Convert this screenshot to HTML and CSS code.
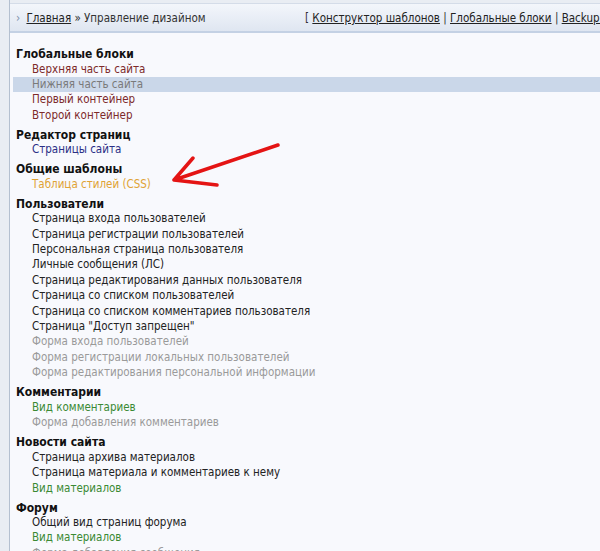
FILE: index.html
```html
<!DOCTYPE html>
<html lang="ru">
<head>
    <meta charset="UTF-8">
    <title>Управление дизайном</title>
    <link rel="stylesheet" href="styles.css">
</head>
<body>
    <div class="page">
        <div class="crumbs">
            <div class="crumbs-left">
                <span class="bullet">›</span>
                <a href="#">Главная</a> » Управление дизайном
            </div>
            <div class="crumbs-right">
                [ <a href="#">Конструктор шаблонов</a> | <a href="#">Глобальные блоки</a> | <a href="#">Backup шаблонов</a> ]
            </div>
        </div>

        <div class="content">
            <div class="group">
                <div class="group-title">Глобальные блоки</div>
                <div class="item red">Верхняя часть сайта</div>
                <div class="item gray active">Нижняя часть сайта</div>
                <div class="item red">Первый контейнер</div>
                <div class="item red">Второй контейнер</div>
            </div>
            <div class="group">
                <div class="group-title">Редактор страниц</div>
                <div class="item blue">Страницы сайта</div>
            </div>
            <div class="group">
                <div class="group-title">Общие шаблоны</div>
                <div class="item orange">Таблица стилей (CSS)</div>
            </div>
            <div class="group">
                <div class="group-title">Пользователи</div>
                <div class="item">Страница входа пользователей</div>
                <div class="item">Страница регистрации пользователей</div>
                <div class="item">Персональная страница пользователя</div>
                <div class="item">Личные сообщения (ЛС)</div>
                <div class="item">Страница редактирования данных пользователя</div>
                <div class="item">Страница со списком пользователей</div>
                <div class="item">Страница со списком комментариев пользователя</div>
                <div class="item">Страница "Доступ запрещен"</div>
                <div class="item gray">Форма входа пользователей</div>
                <div class="item gray">Форма регистрации локальных пользователей</div>
                <div class="item gray">Форма редактирования персональной информации</div>
            </div>
            <div class="group">
                <div class="group-title">Комментарии</div>
                <div class="item green">Вид комментариев</div>
                <div class="item gray">Форма добавления комментариев</div>
            </div>
            <div class="group">
                <div class="group-title">Новости сайта</div>
                <div class="item">Страница архива материалов</div>
                <div class="item">Страница материала и комментариев к нему</div>
                <div class="item green">Вид материалов</div>
            </div>
            <div class="group">
                <div class="group-title">Форум</div>
                <div class="item">Общий вид страниц форума</div>
                <div class="item green">Вид материалов</div>
                <div class="item gray">Форма добавления сообщения</div>
            </div>

            <svg class="arrow" width="130" height="50" viewBox="0 0 130 50">
                <path d="M118 6 L14 41 M14 41 L33 19 M14 41 L57 46" fill="none" stroke="#e41414" stroke-width="3.5" stroke-linecap="round" stroke-linejoin="round"/>
            </svg>
        </div>
    </div>
</body>
</html>
```

FILE: styles.css
```css
* {
    box-sizing: border-box;
    margin: 0;
    padding: 0;
}

body {
    background-color: #e9edf3;
    font-family: "DejaVu Sans Condensed", "DejaVu Sans", sans-serif;
    font-stretch: condensed;
    font-size: 11.5px;
    color: #222;
    overflow: hidden;
    height: 551px;
}

.page {
    margin-left: 9px;
    padding-top: 3px;
    border-left: 1px solid #b4c0d0;
    min-height: 100%;
}

.crumbs {
    display: flex;
    align-items: center;
    height: 30px;
    padding-top: 1px;
    white-space: nowrap;
    overflow: hidden;
    background: linear-gradient(#f3f6fb, #dfe6f1);
    border-top: 1px solid #d4dce8;
    border-bottom: 2px solid #c4d1e4;
    color: #333;
}

.crumbs a {
    color: #222;
    text-decoration: underline;
}

.crumbs-left {
    flex: 0 0 auto;
    width: 295px;
    padding-left: 6px;
}

.bullet {
    color: #7f93ad;
    margin-right: 3px;
}

.crumbs-right {
    flex: 0 0 auto;
}

.content {
    position: relative;
    background-color: #f8f9fd;
    padding: 14px 0 0 3px;
    min-height: 520px;
}

.group {
    margin-bottom: 4.6px;
}

.group-title {
    padding-left: 3px;
    font-weight: bold;
    font-size: 12px;
    line-height: 14.5px;
    color: #111;
}

.item {
    padding-left: 19px;
    line-height: 15.4px;
}

.item.red {
    color: #7d2a2a;
}

.item.blue {
    color: #2b2f86;
}

.item.orange {
    color: #e0a335;
}

.item.green {
    color: #3a8a34;
}

.item.gray {
    color: #9a9a9a;
}

.item.active {
    background-color: #cad7e9;
    color: #7a7a7a;
}

.arrow {
    position: absolute;
    left: 150px;
    top: 106px;
}
```
